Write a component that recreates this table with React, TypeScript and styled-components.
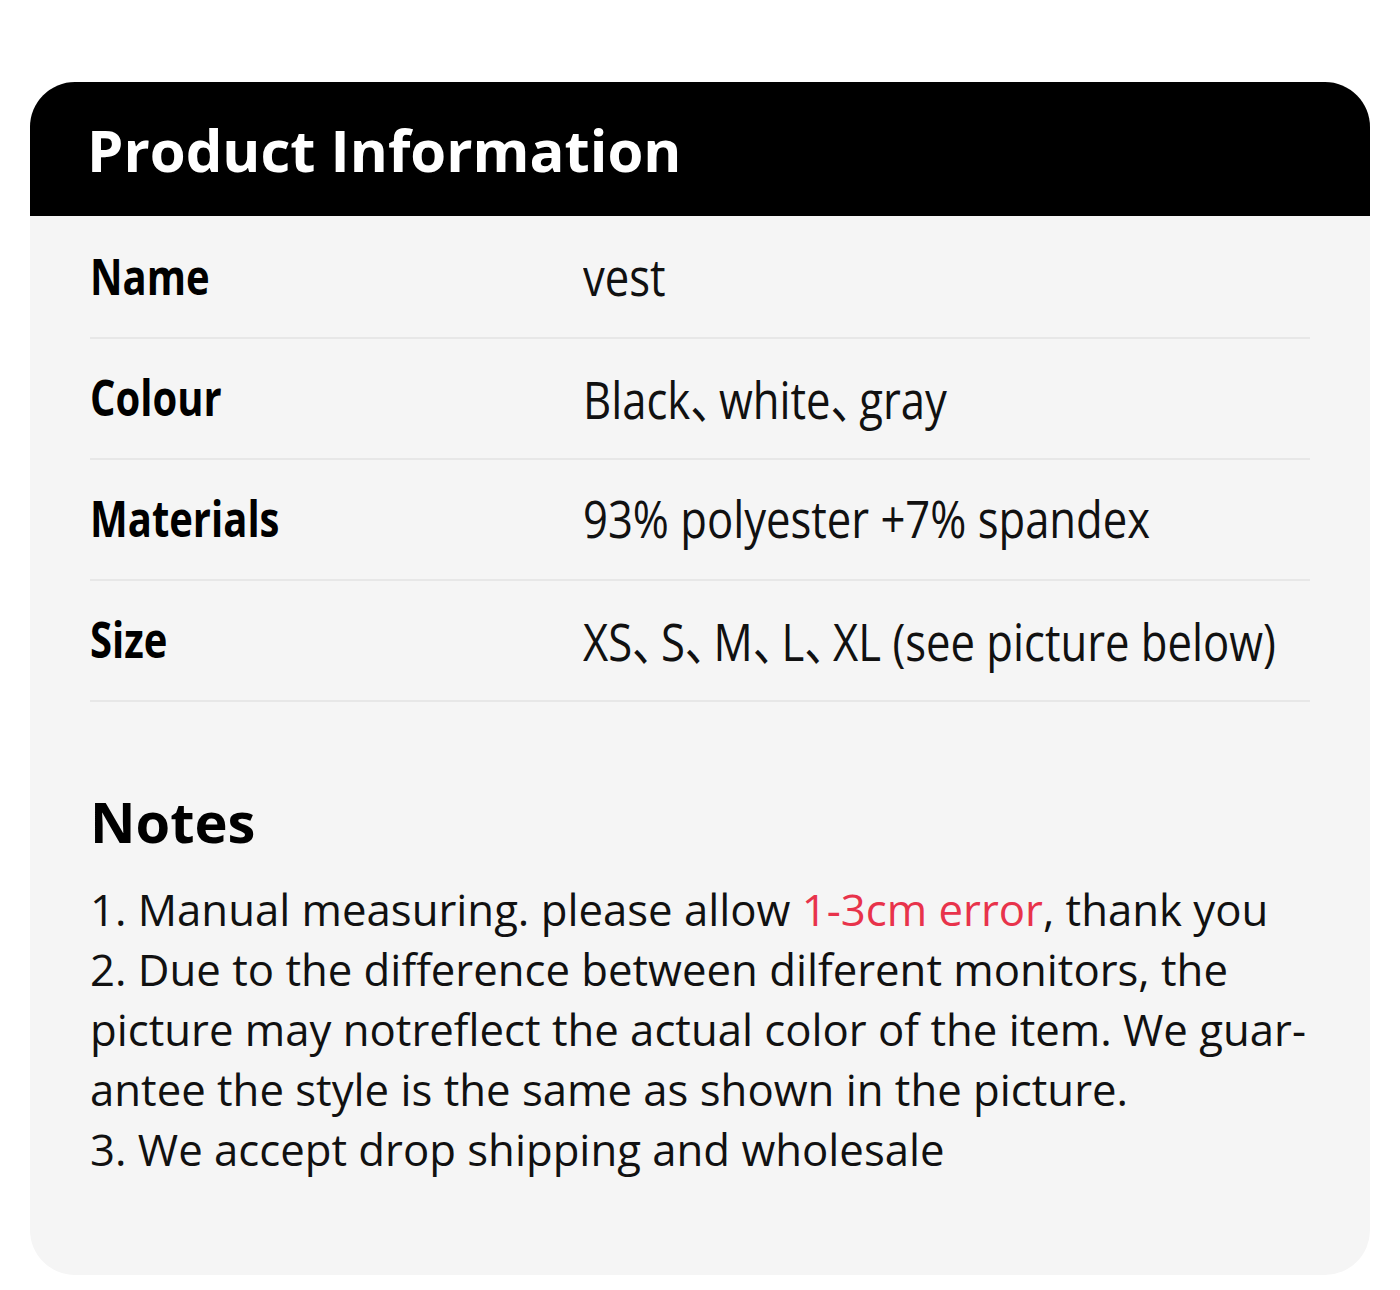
import React from "react";
import styled, { createGlobalStyle } from "styled-components";

const GlobalStyle = createGlobalStyle`
  html, body {
    margin: 0;
    padding: 0;
    background: #fff;
  }
  body {
    font-family: "Open Sans", "Noto Sans", "Noto Sans CJK SC", sans-serif;
    color: #111;
  }
`;

const specs = [
  { label: "Name", value: "vest" },
  { label: "Colour", value: "Black、white、gray" },
  { label: "Materials", value: "93% polyester +7% spandex" },
  { label: "Size", value: "XS、S、M、L、XL (see picture below)" },
];

// the enumeration comma is a full-width glyph; give it a narrower box
const renderValue = (value: string) =>
  value.split("、").map((part, i, all) => (
    <React.Fragment key={i}>
      {part}
      {i < all.length - 1 && <Dun>、</Dun>}
    </React.Fragment>
  ));

const App: React.FC = () => {
  return (
    <>
      <GlobalStyle />
      <Page>
        <Card>
          <Header>
            <Title>Product Information</Title>
          </Header>
          <SpecTable>
            {specs.map((s) => (
              <SpecRow key={s.label}>
                <SpecLabel>{s.label}</SpecLabel>
                <SpecValue>{renderValue(s.value)}</SpecValue>
              </SpecRow>
            ))}
          </SpecTable>
          <Notes>
            <NotesTitle>Notes</NotesTitle>
            <NoteList>
              <NoteLine>
                1. Manual measuring. please allow <Highlight>1-3cm error</Highlight>, thank you
              </NoteLine>
              <NoteLine>
                2. Due to the difference between dilferent monitors, the
                <br />
                picture may notreflect the actual color of the item. We guar-
                <br />
                antee the style is the same as shown in the picture.
              </NoteLine>
              <NoteLine>3. We accept drop shipping and wholesale</NoteLine>
            </NoteList>
          </Notes>
        </Card>
      </Page>
    </>
  );
};

const Page = styled.div`
  padding: 82px 30px 17px;
`;

const Card = styled.div`
  width: 1340px;
  border-radius: 45px;
  overflow: hidden;
  background-color: #f5f5f5;
`;

const Header = styled.header`
  height: 134px;
  display: flex;
  align-items: center;
  padding-left: 57px;
  background-color: #000;
`;

const Title = styled.h1`
  margin: 0;
  font-size: 58px;
  font-weight: 700;
  color: #fff;
  line-height: 1;
  padding-top: 2px;
`;

const SpecTable = styled.div`
  padding: 2px 60px 0;
  display: flex;
  flex-direction: column;
`;

const SpecRow = styled.div`
  display: grid;
  grid-template-columns: 493px 1fr;
  align-items: center;
  height: 119px;
  border-bottom: 2px solid #e7e7e7;
`;

// the source table uses a horizontally squeezed face
const SpecLabel = styled.div`
  justify-self: start;
  font-size: 50px;
  font-weight: 700;
  color: #000;
  transform: scaleX(0.8);
  transform-origin: left center;
  margin-top: -3px;
`;

const SpecValue = styled.div`
  justify-self: start;
  font-size: 51px;
  font-weight: 400;
  color: #111;
  white-space: nowrap;
  transform: scaleX(0.855);
  transform-origin: left center;
  margin-top: -3px;
`;

const Dun = styled.span`
  display: inline-block;
  width: 0.66em;
`;

const Notes = styled.section`
  padding: 86px 60px 96px;
`;

const NotesTitle = styled.h2`
  margin: 0 0 24px;
  font-size: 56px;
  font-weight: 700;
  line-height: 67px;
  color: #000;
`;

const NoteList = styled.div`
  display: flex;
  flex-direction: column;
`;

const NoteLine = styled.div`
  font-size: 43.7px;
  line-height: 60px;
  color: #111;
  white-space: nowrap;
`;

const Highlight = styled.span`
  color: #e8334b;
`;

export default App;
